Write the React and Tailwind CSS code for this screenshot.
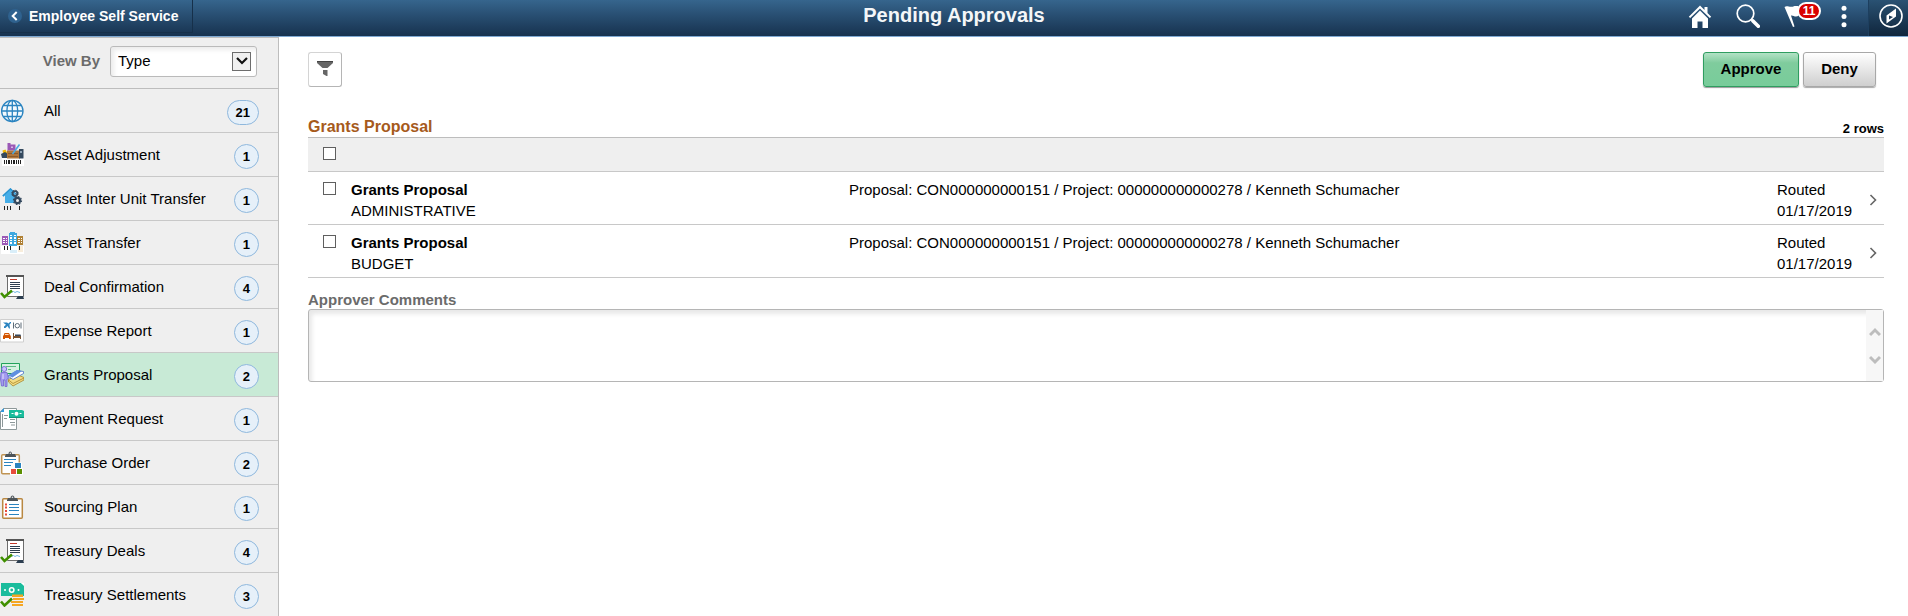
import React, { useState } from 'react'
import clsx from 'clsx'

const GlobeIcon = () => (
  <svg viewBox="0 0 24 24" className="w-6 h-6 shrink-0" fill="none" stroke="#2b84c0" strokeWidth="1.3">
    <circle cx="12.3" cy="12" r="10.7" fill="#f3f9fd" />
    <ellipse cx="12.3" cy="12" rx="5.4" ry="10.7" />
    <path d="M12.3 1.3v21.4M1.6 12h21.4M3.4 6.5h17.8M3.4 17.5h17.8" />
  </svg>
)

const AssetAdjustmentIcon = () => (
  <svg viewBox="0 0 24 24" className="w-6 h-6 shrink-0">
    <path fill="#fff" d="M2 15h22v8H2z" />
    <path fill="#9b59b6" d="M7.500 0h3v1.500h5v6h-8z" />
    <path fill="#d9b8e6" d="M11 3.500h2v1.500h-2z" />
    <path fill="#f2b705" d="M2.500 7.500l3-1 2 4-2 4H4z" />
    <path fill="#34495e" d="M1 11l4-2 3 2v4H2z" />
    <path fill="#b0763a" d="M7 7.500h12l1 8H7z" />
    <path fill="#8a5a2a" d="M8 10h10v1H8zM8 13h10v1H8z" />
    <path fill="#34495e" d="M19 6h4.500v9.500H19z" />
    <path fill="#8fa3b5" d="M20 8h2v2h-2z" />
    <path stroke="#4aa8e0" strokeWidth="1.600" d="M12.500 11l7-9.500" />
    <path fill="#222" d="M4 17h1v4H4zM6 17h1v4H6zM8 17h2v4H8zM11 17h1v4h-1zM13 17h2v4h-2zM16 17h1v4h-1zM18 17h1v4h-1zM20 17h1v4h-1z" />
  </svg>
)

const InterUnitIcon = () => (
  <svg viewBox="0 0 24 24" className="w-6 h-6 shrink-0">
    <path fill="#46aee8" d="M10.500 1L2.500 8.500l1 1.200L5 8.500V16h11V8.500z" />
    <path fill="none" stroke="#2a93d0" strokeWidth="1.300" d="M2.800 9l7.700-7.200 6 5.700" />
    <circle cx="15" cy="6.500" r="2.300" fill="none" stroke="#34495e" strokeWidth="1.800" />
    <circle cx="15" cy="6.500" r="3.300" fill="none" stroke="#34495e" strokeWidth="1" strokeDasharray="1.300 1.300" />
    <circle cx="17.500" cy="13.500" r="2.600" fill="#efefef" stroke="#34495e" strokeWidth="2.200" />
    <circle cx="17.500" cy="13.500" r="4" fill="none" stroke="#34495e" strokeWidth="1.200" strokeDasharray="1.600 1.500" />
    <path fill="#222" d="M4 19h1v4H4zM7 19h1v4H7zM10 19h1v4h-1zM19 19h1v4h-1z" />
  </svg>
)

const AssetTransferIcon = () => (
  <svg viewBox="0 0 24 24" className="w-6 h-6 shrink-0">
    <path fill="#fff" d="M1 15h23v8H1z" />
    <path fill="#f8eddb" d="M18 15h5v6h-5z" />
    <path fill="#d9eef9" d="M10 19h7v3h-7z" />
    <path fill="#9b59b6" d="M2 5h6v9H2z" />
    <path fill="#3fa9e0" d="M9 2h1V1h5v1h2v13H9z" />
    <path fill="#b08135" d="M17 5h6v9h-6z" />
    <path fill="#fff" d="M3 7h2v1H3zM6 7h1v1H6zM3 9h2v1H3zM6 9h1v1H6zM3 11h2v1H3zM6 11h1v1H6zM10 4h2v1h-2zM14 4h2v1h-2zM10 6h2v2h-2zM14 6h2v2h-2zM10 9h2v1h-2zM14 9h2v1h-2zM10 11h2v2h-2zM14 11h2v2h-2zM18 7h2v1h-2zM21 7h1v1h-1zM18 9h2v1h-2zM21 9h1v1h-1zM18 11h2v1h-2zM21 11h1v1h-1z" />
    <path fill="#222" d="M4 15h1v4H4zM7 15h1v4H7zM10 15h1v4h-1zM19 15h1v4h-1z" />
  </svg>
)

const DealIcon = () => (
  <svg viewBox="0 0 24 24" className="w-6 h-6 shrink-0">
    <path fill="#fff" stroke="#6d6d6d" d="M7.500 1v20.500h16V1" />
    <path fill="#555" d="M6 0h18v2H6z" />
    <path fill="#c0392b" d="M10 4h7v1h-7z" />
    <path fill="#2c3e50" d="M10 7h10v1H10zM10 9h10v1H10zM10 11h10v1H10zM10 13h10v1H10z" />
    <path fill="none" stroke="#6cb6e2" d="M11.500 17.500l2-1 1.500 1 2-1 3 1" />
    <path fill="#2c3e50" d="M18 21h5l1 3h-8z" />
    <path fill="none" stroke="#3f8f00" strokeWidth="2.600" d="M1 18l3.500 4L12 15.500" />
  </svg>
)

const ExpenseIcon = () => (
  <svg viewBox="0 0 24 24" className="w-6 h-6 shrink-0">
    <path fill="#fff" stroke="#cfcfcf" d="M.5.500h23v22.500H.5z" />
    <path fill="#2b84c0" d="M3 3.500h4l1.500 1L10 3h1v1L9.500 5.500l.5 4H9L7.500 7 5.500 9H4V7.500L6 5.800z" />
    <path fill="none" stroke="#5c6b77" d="M13.500 3.500v6M21 3.500v6" />
    <circle cx="17.300" cy="6.700" r="2.200" fill="none" stroke="#5c6b77" />
    <path fill="#d35400" d="M4.500 14h4.500l1 2 .8 1v3H9v-1H5v1H3v-3l.8-1z" />
    <path fill="#fbd6b8" d="M5.200 15h3.200l.4 1H4.800z" />
    <path fill="#7a5230" d="M13 14h1v3h7v3h-1v-1h-6v1h-1z" />
    <path fill="#34495e" d="M15 15.500h5.500l.5 1.500h-6z" />
  </svg>
)

const GrantsIcon = () => (
  <svg viewBox="0 0 24 24" className="w-6 h-6 shrink-0">
    <path fill="#d5f2e0" stroke="#22a35a" d="M1.500.500h18v10h-18z" />
    <path stroke="#5dbb84" d="M6 3.500h10M8 6.500h3" />
    <path fill="#f3dc82" stroke="#a8842b" strokeWidth=".8" d="M8.500 16.500L18 12l6 2.500v2.500l-11 6-4.500-4z" />
    <path fill="none" stroke="#a8842b" strokeWidth=".8" d="M8.500 17l4.500 3.500 11-5.500" />
    <path fill="#fff" stroke="#466fc4" strokeWidth=".8" d="M8 13l9-5.500 6.500 1v2L13 16.500z" />
    <path fill="#5f8fe0" d="M8 12.500L17 7l5 1-9.500 6.500z" />
    <circle cx="4.200" cy="6" r="2.500" fill="#c9c4ff" stroke="#7263cf" strokeWidth=".9" />
    <path fill="#a49bf0" stroke="#7263cf" strokeWidth=".8" d="M1 9.500h6l1.500 6-1.500.500v7.500H5V17H3.500v6H1.500L.5 16z" />
    <path stroke="#e5e1ff" d="M3 11v5" />
  </svg>
)

const PaymentIcon = () => (
  <svg viewBox="0 0 24 24" className="w-6 h-6 shrink-0">
    <path fill="#fff" stroke="#8d9899" d="M3.500 1.500h13v21H.5V5z" />
    <path fill="#3498db" d="M0 5l4-4v4z" />
    <path stroke="#8d9899" d="M2.500 7v13M4 8.500h4M4 11.500h3M10 12.500h5M10 15.500h5M11 18h4" />
    <path fill="#1abc9c" d="M9 3h13l2 1v7H9z" />
    <path fill="#12967c" d="M9 10h15v1H9z" />
    <circle cx="16.500" cy="6.700" r="2" fill="#fff" />
    <path fill="#fff" d="M11.500 6h2v1h-2zM19.500 6h2v1h-2z" />
  </svg>
)

const PurchaseIcon = () => (
  <svg viewBox="0 0 24 24" className="w-6 h-6 shrink-0">
    <rect x="1.700" y="3.700" width="17.600" height="19" rx="1" fill="#fff" stroke="#c09453" strokeWidth="1.500" />
    <path fill="#4d5459" d="M5 5l1-2h2.500C8.500-.5 12-.5 12 3h3l1 2v1H5z" />
    <circle cx="10.300" cy="2.300" r=".8" fill="#efefef" />
    <path stroke="#2b84c0" d="M4 8.500h12" />
    <path fill="#fff" d="M13 11.500h9v6h1v6.500H10v-7h3z" />
    <path fill="#2b84c0" d="M15 12h6v5h-6z" />
    <path fill="#e74c3c" d="M11 18h5v5h-5z" />
    <path fill="#5b8f00" d="M17 18h5v5h-5z" />
    <path stroke="#2b84c0" d="M4 11.500h9M4 14.500h7" />
  </svg>
)

const SourcingIcon = () => (
  <svg viewBox="0 0 24 24" className="w-6 h-6 shrink-0">
    <rect x="2.700" y="3.700" width="19.600" height="19.500" rx="1" fill="#fff" stroke="#b98842" strokeWidth="1.500" />
    <path fill="#4d5459" d="M7 5l1-2h2.500c0-3.500 4-3.500 4 0H17l1 2v1H7z" />
    <circle cx="12.500" cy="2.300" r=".8" fill="#efefef" />
    <path stroke="#e74c3c" strokeWidth="2" d="M5 9.500h2M5 12.500h2M5 16h2M5 19.500h2" />
    <path stroke="#2b84c0" d="M9 9.500h10M9 12.500h10M9 15.500h10M9 19.500h10" />
  </svg>
)

const SettlementsIcon = () => (
  <svg viewBox="0 0 24 24" className="w-6 h-6 shrink-0">
    <path fill="#1abc9c" d="M1 0h20l3 2v11H1z" />
    <path fill="#fff" d="M21 0h3v3z" />
    <circle cx="11.700" cy="7" r="2.200" fill="none" stroke="#fff" strokeWidth="1.600" />
    <circle cx="5" cy="7" r="1" fill="#fff" />
    <circle cx="18.500" cy="7" r="1" fill="#fff" />
    <path fill="#f5a623" d="M12 11.500h11v2.500H12zM13 15h11v2H13zM11 18h12v2H11zM12 21h11v2H12z" />
    <path fill="none" stroke="#3f8f00" strokeWidth="2.600" d="M1 18.500l3.500 4L12 15.500" />
  </svg>
)

const categories = [
  { label: 'All', count: 21, Icon: GlobeIcon },
  { label: 'Asset Adjustment', count: 1, Icon: AssetAdjustmentIcon },
  { label: 'Asset Inter Unit Transfer', count: 1, Icon: InterUnitIcon },
  { label: 'Asset Transfer', count: 1, Icon: AssetTransferIcon },
  { label: 'Deal Confirmation', count: 4, Icon: DealIcon },
  { label: 'Expense Report', count: 1, Icon: ExpenseIcon },
  { label: 'Grants Proposal', count: 2, Icon: GrantsIcon },
  { label: 'Payment Request', count: 1, Icon: PaymentIcon },
  { label: 'Purchase Order', count: 2, Icon: PurchaseIcon },
  { label: 'Sourcing Plan', count: 1, Icon: SourcingIcon },
  { label: 'Treasury Deals', count: 4, Icon: DealIcon },
  { label: 'Treasury Settlements', count: 3, Icon: SettlementsIcon }
]

const rows = [
  {
    id: 1,
    title: 'Grants Proposal',
    type: 'ADMINISTRATIVE',
    description: 'Proposal: CON000000000151 / Project: 000000000000278 / Kenneth Schumacher',
    date: '01/17/2019'
  },
  {
    id: 2,
    title: 'Grants Proposal',
    type: 'BUDGET',
    description: 'Proposal: CON000000000151 / Project: 000000000000278 / Kenneth Schumacher',
    date: '01/17/2019'
  }
]

const Header = () => (
  <header className="grid grid-cols-[1fr_auto_1fr] h-[37px] border-b border-[#7fa9d3] bg-linear-to-b from-[#36658d] to-[#17324f] text-white">
    <div>
      <button className="flex items-center gap-[7px] h-[33px] pl-2 w-[193px] border-r border-b border-[#16304a] text-sm font-bold whitespace-nowrap">
        <svg viewBox="0 0 14 14" className="w-[14px] h-[14px] shrink-0">
          <circle cx="7" cy="7" r="7" fill="#2f628f" />
          <path d="M8.700 3L4.700 7l4 4" fill="none" stroke="#fff" strokeWidth="2" />
        </svg>
        Employee Self Service
      </button>
    </div>
    <h1 className="text-xl leading-[30px] font-bold text-[#f4f6f8]">Pending Approvals</h1>
    <div className="flex justify-end">
      <button aria-label="Home" className="w-12 flex justify-center pt-1">
        <svg viewBox="0 0 24 24" className="w-6 h-6" fill="#fff">
          <path d="M12 1.500L.8 12.700l1.400 1.400L12 4.500l9.800 9.600 1.400-1.400L19.500 9V3h-3v3z" />
          <path d="M12 6.500l-8 8V24h5.500v-6.500h5V24H20v-9.500z" />
        </svg>
      </button>
      <button aria-label="Search" className="w-12 flex justify-center pt-1">
        <svg viewBox="0 0 24 24" className="w-6 h-6" fill="none" stroke="#fff">
          <circle cx="9.500" cy="9.500" r="8.300" strokeWidth="1.700" />
          <path d="M15.500 15.500l2 2" strokeWidth="2" />
          <path d="M17 17l5.300 5.300" strokeWidth="3.600" strokeLinecap="round" />
        </svg>
      </button>
      <button aria-label="Notifications" className="relative w-12 flex pl-3 pt-1">
        <svg viewBox="0 0 24 24" className="w-6 h-6" fill="#fff">
          <path d="M.5 3c3-2.500 5 1.500 10-1h4v10c-4 1.500-5-1-7.500-.5L10.500 22.500 9 23z" />
        </svg>
        <span className="absolute left-[25px] top-[2px] w-6 h-[18px] rounded-full border-2 border-white bg-[#d90000] text-xs leading-[14px] font-bold text-center">
          11
        </span>
      </button>
      <button aria-label="Actions" className="w-12 flex justify-center pt-1">
        <svg viewBox="0 0 24 24" className="w-6 h-6" fill="#fff">
          <circle cx="12" cy="4.200" r="2.500" />
          <circle cx="12" cy="12.500" r="2.500" />
          <circle cx="12" cy="20.800" r="2.500" />
        </svg>
      </button>
      <button aria-label="Navigator" className="w-10 flex pl-[10px] pt-1 bg-linear-to-b from-[#2a5273] to-[#10263d] border-l border-[#1d3f5f]">
        <svg viewBox="0 0 24 24" className="w-6 h-6">
          <circle cx="12" cy="12" r="11" fill="none" stroke="#fff" strokeWidth="1.600" />
          <path fill="#fff" fillRule="evenodd" d="M17 4.500v8L7.500 19.500v-8zM10 11.500v4l4-2.500z" />
        </svg>
      </button>
    </div>
  </header>
)

const Sidebar = ({ selected, setSelected }) => (
  <aside className="w-[279px] shrink-0 bg-[#efefef] border-r border-t border-[#bdbdbd]">
    <div className="flex items-center justify-end gap-[10px] h-[51px] pr-[21px] pb-3 pt-2 border-b border-[#bdbdbd]">
      <label htmlFor="view-by" className="font-bold text-[#6b6b6b]">View By</label>
      <div className="relative">
        <select
          id="view-by"
          className="appearance-none block w-[147px] h-[31px] pl-[7px] border border-[#bababa] rounded-[3px] bg-white shadow-[inset_3px_3px_4px_#ececec]"
        >
          <option>Type</option>
        </select>
        <span className="pointer-events-none absolute right-[6px] top-[6px] w-[19px] h-[19px] border border-[#6d6d6d] bg-[#f0f0f0] flex items-center justify-center">
          <svg viewBox="0 0 12 8" className="w-3 h-2">
            <path d="M1 1l5 5 5-5" fill="none" stroke="#111" strokeWidth="2.200" />
          </svg>
        </span>
      </div>
    </div>
    <ul>
      {categories.map(({ label, count, Icon }) => (
        <li key={label} className="border-b border-[#c8c8c8] last:border-b-0">
          <button
            onClick={() => setSelected(label)}
            className={clsx(
              'flex items-center w-full h-[43px] pt-px pr-[19px] text-left',
              selected === label && 'bg-[#c8ead6]'
            )}
          >
            <Icon />
            <span className="flex-1 pl-5">{label}</span>
            <span className="min-w-6 h-[25px] mt-[2px] px-2 rounded-full border border-[#8fb8dd] bg-[#e6f0f9] text-[13px] leading-[23px] font-bold text-center">
              {count}
            </span>
          </button>
        </li>
      ))}
    </ul>
  </aside>
)

const Checkbox = ({ label, checked, onChange }) => (
  <input
    type="checkbox"
    aria-label={label}
    checked={checked}
    onChange={onChange}
    className="appearance-none block w-[13px] h-[13px] border border-[#5f5f5f] bg-white checked:bg-[#36658d]"
  />
)

const ApprovalsTable = ({ checked, setChecked }) => {
  const allChecked = checked.length === rows.length

  const toggle = (id) =>
    setChecked(checked.includes(id) ? checked.filter((c) => c !== id) : [...checked, id])

  return (
    <table className="w-full table-fixed border-t border-[#bdbdbd]">
      <thead>
        <tr className="h-[34px] bg-[#efefef] border-b border-[#c8c8c8]">
          <th className="w-[43px] pl-[15px] align-top pt-[9px]">
            <Checkbox
              label="Select all rows"
              checked={allChecked}
              onChange={() => setChecked(allChecked ? [] : rows.map((r) => r.id))}
            />
          </th>
          <th className="w-[498px]" />
          <th />
          <th className="w-[107px]" />
        </tr>
      </thead>
      <tbody>
        {rows.map((row) => (
          <tr key={row.id} className="h-[53px] border-b border-[#c8c8c8] align-top leading-[21px] *:pt-[7px]">
            <td className="pl-[15px]">
              <div className="pt-[3px]">
                <Checkbox
                  label={`Select ${row.type}`}
                  checked={checked.includes(row.id)}
                  onChange={() => toggle(row.id)}
                />
              </div>
            </td>
            <td>
              <div className="font-bold">{row.title}</div>
              <div>{row.type}</div>
            </td>
            <td>{row.description}</td>
            <td>
              <div className="flex items-center justify-between pr-[7px]">
                <div>
                  <div>Routed</div>
                  <div>{row.date}</div>
                </div>
                <button aria-label={`Open ${row.type}`}>
                  <svg viewBox="0 0 8 12" className="w-2 h-3">
                    <path d="M1.500 1l5 5-5 5" fill="none" stroke="#666" strokeWidth="1.600" />
                  </svg>
                </button>
              </div>
            </td>
          </tr>
        ))}
      </tbody>
    </table>
  )
}

const App = () => {
  const [selected, setSelected] = useState('Grants Proposal')
  const [checked, setChecked] = useState([])
  const [comments, setComments] = useState('')

  return (
    <div className="min-h-screen flex flex-col bg-white text-black text-[15px] font-['Liberation_Sans',Arial,sans-serif]">
      <Header />
      <div className="flex flex-1">
        <Sidebar selected={selected} setSelected={setSelected} />
        <main className="flex-1 pl-[29px] pr-6 pt-[15px]">
          <div className="flex justify-between pr-2">
            <button aria-label="Filter" className="w-[34px] h-[35px] flex justify-center pt-2 border border-[#d4d4d4] border-b-[#b5b5b5] border-r-[#b5b5b5] rounded-[3px] bg-white">
              <svg viewBox="0 0 16 16" className="w-4 h-4">
                <path fill="#666" d="M0 0h16v2l-5.500 5h-5L0 2z" />
                <path fill="#444" d="M0 0h16v1H0z" />
                <path fill="#666" d="M6 9h4.500v6H9.500L6 13z" />
              </svg>
            </button>
            <div className="flex gap-1">
              <button className="w-24 h-[35px] pb-px border border-[#2f9d60] rounded-[3px] bg-linear-to-b from-[#b2e2c6] via-[#7fcc9d] via-30% to-[#78cc9a] font-bold shadow-[0_1px_1px_#999]">
                Approve
              </button>
              <button className="w-[73px] h-[35px] pb-px border border-[#a8a8a8] rounded-[3px] bg-linear-to-b from-white to-[#cfcfcf] font-bold shadow-[0_1px_1px_#aaa]">
                Deny
              </button>
            </div>
          </div>

          <div className="flex items-end justify-between mt-[30px]">
            <h2 className="text-base leading-5 font-bold text-[#a65a1c]">Grants Proposal</h2>
            <span className="text-[13px] leading-4 font-bold">2 rows</span>
          </div>
          <ApprovalsTable checked={checked} setChecked={setChecked} />

          <label htmlFor="comments" className="block mt-[13px] leading-[18px] font-bold text-[#6b6b6b]">
            Approver Comments
          </label>
          <div className="relative">
            <textarea
              id="comments"
              value={comments}
              onChange={(e) => setComments(e.target.value)}
              className="block w-full h-[73px] pl-2 pr-6 resize-none border border-[#b5b5b5] rounded-[3px] shadow-[inset_3px_4px_4px_#e8e8e8]"
            />
            <div className="pointer-events-none absolute right-px inset-y-px w-[17px] bg-[#f7f7f7] flex flex-col items-center justify-center gap-[18px]">
              <svg viewBox="0 0 12 10" className="w-3 h-[10px]">
                <path d="M1 8l5-5 5 5" fill="none" stroke="#bdbdbd" strokeWidth="3" />
              </svg>
              <svg viewBox="0 0 12 10" className="w-3 h-[10px]">
                <path d="M1 2l5 5 5-5" fill="none" stroke="#bdbdbd" strokeWidth="3" />
              </svg>
            </div>
          </div>
        </main>
      </div>
    </div>
  )
}

export default App
